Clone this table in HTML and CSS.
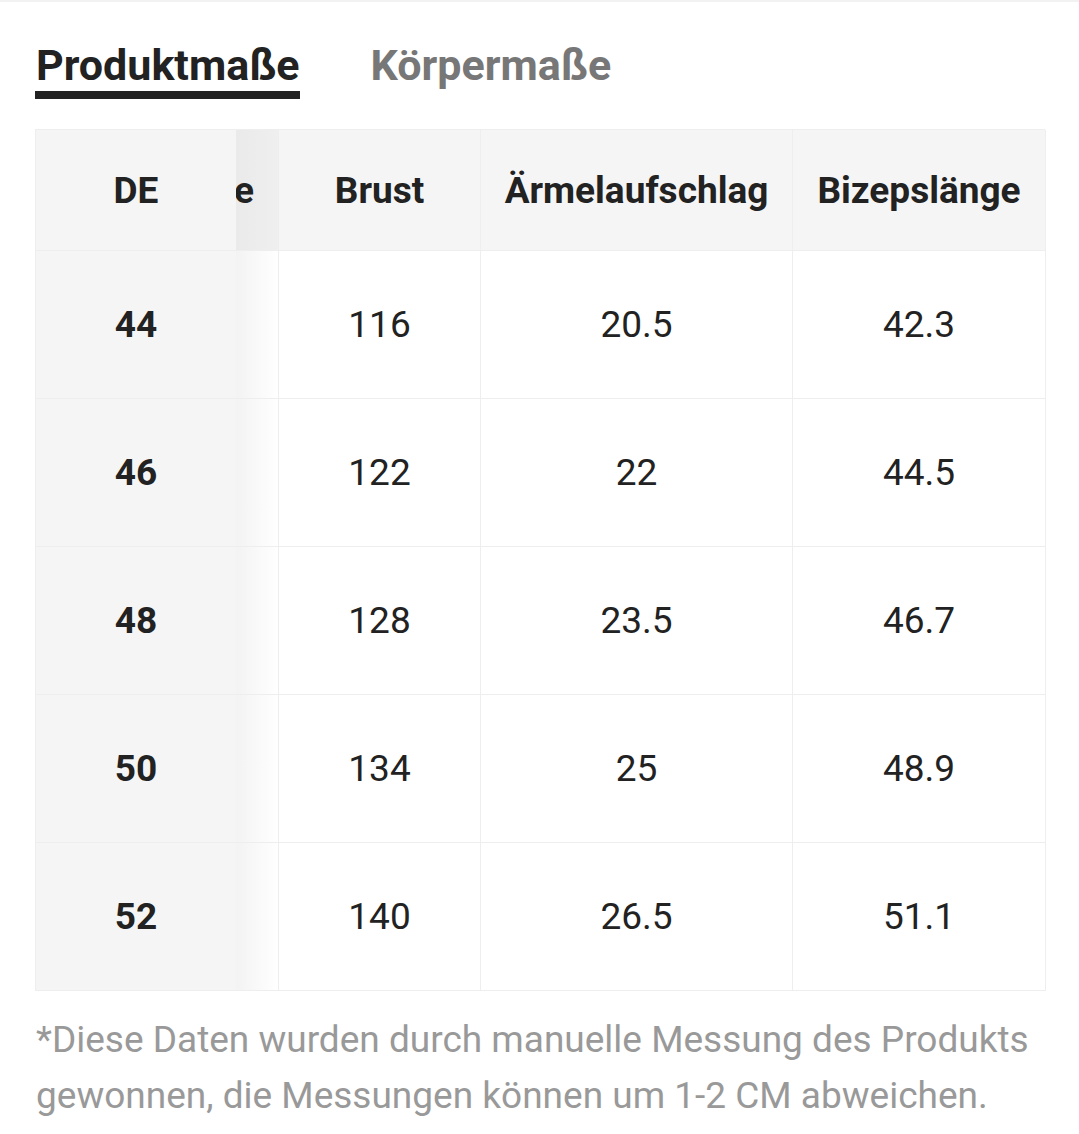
FILE: index.html
```html
<!DOCTYPE html>
<html lang="de">
<head>
<meta charset="utf-8">
<title>Größentabelle</title>
<link rel="stylesheet" href="styles.css">
</head>
<body>
<div class="page">
  <div class="tabs">
    <div class="tab active">Produktmaße</div>
    <div class="tab">Körpermaße</div>
  </div>
  <div class="table">
    <div class="cell head sticky">DE</div>
    <div class="cell head clip"><span>Länge</span></div>
    <div class="cell head">Brust</div>
    <div class="cell head">Ärmelaufschlag</div>
    <div class="cell head">Bizepslänge</div>

    <div class="cell sticky">44</div>
    <div class="cell clip"></div>
    <div class="cell">116</div>
    <div class="cell">20.5</div>
    <div class="cell">42.3</div>

    <div class="cell sticky">46</div>
    <div class="cell clip"></div>
    <div class="cell">122</div>
    <div class="cell">22</div>
    <div class="cell">44.5</div>

    <div class="cell sticky">48</div>
    <div class="cell clip"></div>
    <div class="cell">128</div>
    <div class="cell">23.5</div>
    <div class="cell">46.7</div>

    <div class="cell sticky">50</div>
    <div class="cell clip"></div>
    <div class="cell">134</div>
    <div class="cell">25</div>
    <div class="cell">48.9</div>

    <div class="cell sticky">52</div>
    <div class="cell clip"></div>
    <div class="cell">140</div>
    <div class="cell">26.5</div>
    <div class="cell">51.1</div>
  </div>
  <p class="note">*Diese Daten wurden durch manuelle Messung des Produkts gewonnen, die Messungen können um 1-2 CM abweichen.</p>
</div>
</body>
</html>
```

FILE: styles.css
```css
* { box-sizing: border-box; }
html, body { margin: 0; padding: 0; background: #fff; }
body {
  font-family: Roboto, "Liberation Sans", Arial, sans-serif;
  color: #222;
  border-top: 2px solid #f2f2f2;
}
.page {
  padding: 0 35px;
}
.tabs {
  display: flex;
  gap: 70px;
  padding-top: 37px;
  height: 127px;
}
.tab {
  font-size: 43px;
  font-weight: 700;
  color: #777;
  line-height: 52px;
  height: 60px;
  padding-left: 1px;
}
.tab.active {
  color: #222;
  border-bottom: 8px solid #222;
}
.table {
  display: grid;
  grid-template-columns: 200px 43px 202px 312px 253px;
  grid-template-rows: 121px repeat(5, 148px);
  width: 1010px;
  border-top: 1px solid #eeeeee;
  border-left: 1px solid #eeeeee;
}
.cell {
  display: flex;
  align-items: center;
  justify-content: center;
  border-right: 1px solid #eeeeee;
  border-bottom: 1px solid #eeeeee;
  font-size: 37px;
  font-weight: 400;
  color: #222;
  background: #fff;
}
.cell.head {
  background: #f5f5f5;
  font-weight: 700;
  font-size: 37px;
}
.cell.sticky {
  background: #f5f5f5;
  font-weight: 700;
  border-right: none;
}
.cell.clip {
  overflow: hidden;
  justify-content: flex-end;
  padding-right: 24px;
  white-space: nowrap;
  background: linear-gradient(to right, #f3f3f3, #ffffff);
}
.cell.head.clip {
  background: linear-gradient(to right, #eaeaea, #efefef);
}
.note {
  margin: 21px 0 0 0;
  font-size: 37px;
  line-height: 56px;
  color: #999;
  padding-left: 1px;
}
```
